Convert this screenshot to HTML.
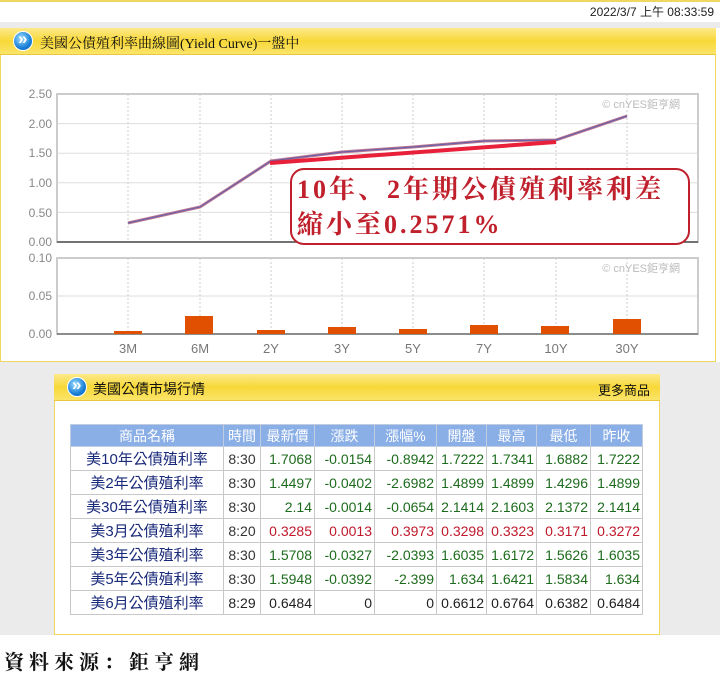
<!DOCTYPE html>
<html><head><meta charset="utf-8"><style>
*{margin:0;padding:0;box-sizing:border-box}
body{width:720px;height:680px;position:relative;background:#fff;font-family:"Liberation Sans","Noto Sans CJK TC",sans-serif;overflow:hidden}
.abs{position:absolute}
.hdr{background:linear-gradient(180deg,#fde98a 0%,#f8d838 50%,#fbe46a 100%);border-bottom:1px solid #e8c840}
.ico{position:absolute;width:20px;height:20px;border-radius:50%;background:radial-gradient(circle at 40% 35%,#9ee0ff,#1a7fd8 60%,#0b5cb0);border:1px solid #fff}
.ico:after{content:"»";position:absolute;left:4px;top:-3px;color:#fff;font-weight:bold;font-size:17px}
table{border-collapse:collapse;font-family:"Liberation Sans","Noto Sans CJK TC",sans-serif;font-size:14px}
td,th{border:1px solid #c8c8c8;height:24px;padding:0 2px;text-align:right;color:#1d6b1d}
th{background:#8aaee6;color:#fff;font-weight:normal;text-align:center;height:22px;border-color:#c0cde0}
td.n{color:#1a2a7a;text-align:center;font-size:15px}
td.t{color:#333;text-align:center}
tr.r td{color:#c0192c}
tr.r td.n{color:#1a2a7a}tr.r td.t{color:#333}
tr.k td{color:#222}tr.k td.n{color:#1a2a7a}
</style></head><body>
<div class="abs" style="left:0;top:0;width:720px;height:2px;background:#f0d860"></div>
<div class="abs" style="right:6px;top:3px;font-size:12px;color:#222">2022/3/7 上午 08:33:59</div>
<div class="abs" style="left:0;top:22px;width:720px;height:6px;background:#ebebeb"></div>
<div class="abs" style="left:0;top:28px;width:716px;height:334px;border:1px solid #f0d860;background:#fff"></div>
<div class="abs hdr" style="left:0;top:28px;width:716px;height:27px"></div>
<div class="ico" style="left:13px;top:31px"></div>
<div class="abs" style="left:40px;top:33px;font-size:14px;color:#111;font-family:'Liberation Serif','Noto Serif CJK SC',serif">美國公債殖利率曲線圖(Yield Curve)一盤中</div>
<div class="abs" style="left:0;top:362px;width:720px;height:273px;background:#ebebeb"></div>
<svg class="abs" style="left:0;top:60px" width="716" height="300" font-family="Liberation Sans,sans-serif" font-size="12">
<g fill="#888" text-anchor="end">
<text x="52" y="38">2.50</text><text x="52" y="68">2.00</text><text x="52" y="97">1.50</text><text x="52" y="127">1.00</text><text x="52" y="157">0.50</text><text x="52" y="186">0.00</text>
<text x="52" y="202">0.10</text><text x="52" y="240">0.05</text><text x="52" y="278">0.00</text></g>
<g stroke="#ddd"><line x1="57" x2="698" y1="63.6" y2="63.6"/><line x1="57" x2="698" y1="93.2" y2="93.2"/><line x1="57" x2="698" y1="122.8" y2="122.8"/><line x1="57" x2="698" y1="152.4" y2="152.4"/><line x1="57" x2="698" y1="236" y2="236"/></g>
<g stroke="#ccc" stroke-dasharray="2,2"><path d="M128 34V182M200 34V182M271 34V182M342 34V182M413 34V182M484 34V182M556 34V182M627 34V182M128 198V274M200 198V274M271 198V274M342 198V274M413 198V274M484 198V274M556 198V274M627 198V274"/></g>
<rect x="57" y="34" width="641" height="148" fill="none" stroke="#ccc" stroke-width="2"/>
<rect x="57" y="198" width="641" height="76" fill="none" stroke="#ccc" stroke-width="2"/>
<line x1="57" x2="698" y1="182" y2="182" stroke="#555" stroke-width="1.5"/>
<line x1="57" x2="698" y1="274" y2="274" stroke="#777" stroke-width="1.5"/>
<g fill="#bbb" font-size="11" text-anchor="end"><text x="680" y="48">© cnYES鉅亨網</text><text x="680" y="212">© cnYES鉅亨網</text></g>
<polyline points="128,163 200,147 271,101 342,92 413,87 484,81 556,80 627,56" fill="none" stroke="#c07890" stroke-width="3"/>
<polyline points="128,163 200,147 271,101 342,92 413,87 484,81 556,80 627,56" fill="none" stroke="#6a60a8" stroke-width="1.2"/>
<line x1="270" y1="103" x2="556" y2="82" stroke="#e8203a" stroke-width="4"/>
<g fill="#e05000"><rect x="114" y="271" width="28" height="3"/><rect x="185" y="256" width="28" height="18"/><rect x="257" y="270" width="28" height="4"/><rect x="328" y="267" width="28" height="7"/><rect x="399" y="269" width="28" height="5"/><rect x="470" y="265" width="28" height="9"/><rect x="541" y="266" width="28" height="8"/><rect x="613" y="259" width="28" height="15"/></g>
<g fill="#777" font-size="13" text-anchor="middle"><text x="128" y="293">3M</text><text x="200" y="293">6M</text><text x="271" y="293">2Y</text><text x="342" y="293">3Y</text><text x="413" y="293">5Y</text><text x="484" y="293">7Y</text><text x="556" y="293">10Y</text><text x="627" y="293">30Y</text></g>
</svg>
<div class="abs" style="left:290px;top:168px;width:400px;height:77px;border:2px solid #c0202c;border-radius:14px;background:#fff;color:#c0202c;font-family:'Liberation Serif','Noto Serif CJK SC',serif;font-size:26px;font-weight:bold;letter-spacing:3px;line-height:35px;padding:2px 0 0 5px;white-space:nowrap">10年、2年期公債殖利率利差<br>縮小至0.2571%</div>
<div class="abs" style="left:54px;top:374px;width:606px;height:261px;border:1px solid #f0d860;background:#fff"></div>
<div class="abs hdr" style="left:54px;top:374px;width:606px;height:27px"></div>
<div class="ico" style="left:67px;top:377px"></div>
<div class="abs" style="left:93px;top:379px;font-size:14px;color:#111">美國公債市場行情</div>
<div class="abs" style="left:598px;top:380px;font-size:13px;color:#111">更多商品</div>
<table class="abs" style="left:70px;top:424px;width:573px">
<tr><th style="width:153px">商品名稱</th><th style="width:37px">時間</th><th style="width:54px">最新價</th><th style="width:60px">漲跌</th><th style="width:62px">漲幅%</th><th style="width:50px">開盤</th><th style="width:50px">最高</th><th style="width:54px">最低</th><th>昨收</th></tr>
<tr><td class="n">美10年公債殖利率</td><td class="t">8:30</td><td>1.7068</td><td>-0.0154</td><td>-0.8942</td><td>1.7222</td><td>1.7341</td><td>1.6882</td><td>1.7222</td></tr>
<tr><td class="n">美2年公債殖利率</td><td class="t">8:30</td><td>1.4497</td><td>-0.0402</td><td>-2.6982</td><td>1.4899</td><td>1.4899</td><td>1.4296</td><td>1.4899</td></tr>
<tr><td class="n">美30年公債殖利率</td><td class="t">8:30</td><td>2.14</td><td>-0.0014</td><td>-0.0654</td><td>2.1414</td><td>2.1603</td><td>2.1372</td><td>2.1414</td></tr>
<tr class="r"><td class="n">美3月公債殖利率</td><td class="t">8:20</td><td>0.3285</td><td>0.0013</td><td>0.3973</td><td>0.3298</td><td>0.3323</td><td>0.3171</td><td>0.3272</td></tr>
<tr><td class="n">美3年公債殖利率</td><td class="t">8:30</td><td>1.5708</td><td>-0.0327</td><td>-2.0393</td><td>1.6035</td><td>1.6172</td><td>1.5626</td><td>1.6035</td></tr>
<tr><td class="n">美5年公債殖利率</td><td class="t">8:30</td><td>1.5948</td><td>-0.0392</td><td>-2.399</td><td>1.634</td><td>1.6421</td><td>1.5834</td><td>1.634</td></tr>
<tr class="k"><td class="n">美6月公債殖利率</td><td class="t">8:29</td><td>0.6484</td><td>0</td><td>0</td><td>0.6612</td><td>0.6764</td><td>0.6382</td><td>0.6484</td></tr>
</table>
<div class="abs" style="left:4px;top:646px;font-size:20px;font-weight:bold;letter-spacing:5px;color:#111;font-family:'Liberation Serif','Noto Serif CJK SC',serif">資料來源：鉅亨網</div>
</body></html>
